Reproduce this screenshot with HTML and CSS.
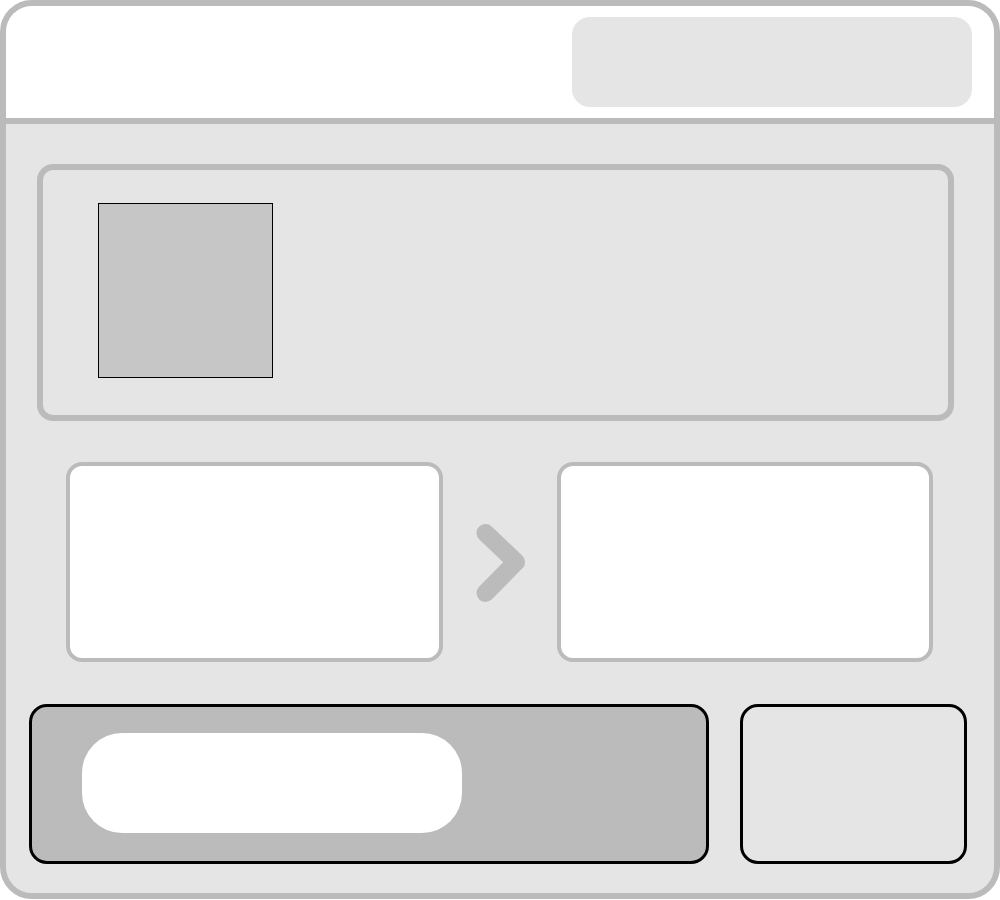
FILE: index.html
```html
<!DOCTYPE html>
<html>
<head>
<meta charset="utf-8">
<link rel="stylesheet" href="styles.css">
</head>
<body>
<div class="frame">
  <header class="header">
    <div class="search"></div>
  </header>
  <main class="main">
    <section class="hero">
      <div class="thumb"></div>
    </section>
    <section class="flow">
      <div class="step"></div>
      <svg class="chevron" width="50" height="80" viewBox="0 0 50 80">
        <polyline points="10.5,11 41,40 10.5,71" fill="none" stroke="#bbbbbb" stroke-width="18" stroke-linecap="round" stroke-linejoin="round"/>
      </svg>
      <div class="step"></div>
    </section>
    <section class="actions">
      <div class="bar">
        <div class="pill"></div>
      </div>
      <div class="side"></div>
    </section>
  </main>
</div>
</body>
</html>
```
FILE: styles.css
```css
html, body {
  margin: 0;
  padding: 0;
  background: #ffffff;
}
.frame {
  box-sizing: border-box;
  width: 1000px;
  height: 899px;
  border: 6px solid #bbbbbb;
  border-radius: 32px;
  background: #e5e5e5;
  overflow: hidden;
  display: flex;
  flex-direction: column;
}
.header {
  box-sizing: border-box;
  height: 118px;
  flex: none;
  background: #ffffff;
  border-bottom: 6px solid #bbbbbb;
  display: flex;
  justify-content: flex-end;
  align-items: flex-start;
  padding: 11px 22px 0 0;
}
.search {
  width: 400px;
  height: 90px;
  border-radius: 18px;
  background: #e5e5e5;
}
.main {
  display: flex;
  flex-direction: column;
  padding-top: 40px;
}
.hero {
  box-sizing: border-box;
  height: 257px;
  margin: 0 40px 0 31px;
  border: 6px solid #bbbbbb;
  border-radius: 16px;
  padding: 33px 0 0 55px;
}
.thumb {
  box-sizing: border-box;
  width: 175px;
  height: 175px;
  background: #c6c6c6;
  border: 1px solid #000000;
}
.flow {
  display: flex;
  align-items: center;
  margin: 41px 61px 0 60px;
  height: 200px;
}
.step {
  box-sizing: border-box;
  flex: 1;
  height: 200px;
  background: #ffffff;
  border: 4.5px solid #bbbbbb;
  border-radius: 16px;
}
.chevron {
  flex: none;
  margin: 0 32px 0 32px;
}
.actions {
  display: flex;
  gap: 31px;
  margin: 42px 0 0 23px;
  height: 160px;
}
.bar {
  box-sizing: border-box;
  width: 680px;
  height: 160px;
  background: #bbbbbb;
  border: 3.5px solid #000000;
  border-radius: 18px;
  padding: 25.5px 0 0 49.5px;
}
.pill {
  width: 380px;
  height: 100px;
  background: #ffffff;
  border-radius: 40px;
}
.side {
  box-sizing: border-box;
  width: 227px;
  height: 160px;
  background: #e5e5e5;
  border: 3.5px solid #000000;
  border-radius: 18px;
}
```
